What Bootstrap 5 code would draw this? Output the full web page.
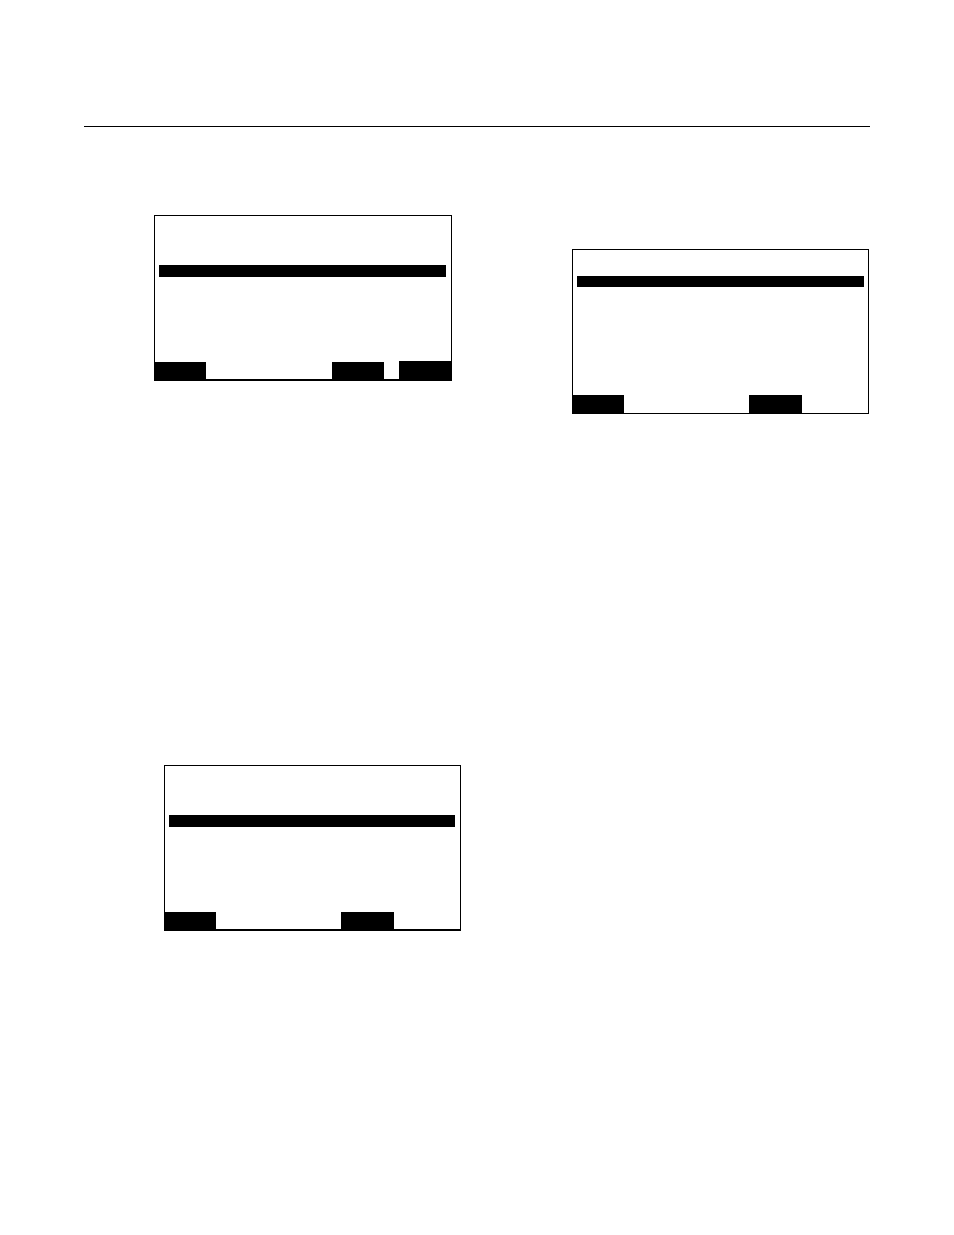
<!DOCTYPE html>
<html lang="en">
<head>
<meta charset="utf-8">
<meta name="viewport" content="width=device-width, initial-scale=1">
<title>Terminal screens</title>
<link href="https://cdn.jsdelivr.net/npm/bootstrap@5.3.0/dist/css/bootstrap.min.css" rel="stylesheet">
<style>
  body { font-family: "Liberation Sans", Arial, sans-serif; background: #fff; color: #000; }
  .sheet { padding: 126px 84px; }
  .rule { border-top: 1px solid #000; }
  .lcd { height: 166px; border: 1px solid #000; border-bottom-width: 2px; }
  .lcd-first { margin: 88px 25px 0 70px; }
  .lcd-second { margin: 122px 1px 0 95px; height: 165px; border-bottom-width: 1px; }
  .lcd-third { margin: 384px 16px 0 80px; }
  /* selected line */
  .selection { height: 12px; margin: 49px 5px 0 4px; background: #000; }
  .lcd-second .selection { height: 11px; margin: 26px 4px 0; }
  /* soft keys along the bottom edge */
  .softkey { width: 53px; height: 17px; background: #000; }
  .softkey-start { width: 51px; }
  .lcd-first .softkey-end { width: 52px; }
  .lcd-first .softkey-last { width: 52px; height: 18px; margin-left: 15px; }
  .lcd-second .softkey { height: 18px; }
  .softkey-blank { width: 66px; }
</style>
</head>
<body>
<main class="sheet">
  <header class="rule"></header>
  <div class="row g-0">
    <div class="col-6">
      <section class="lcd lcd-first d-flex flex-column">
        <div class="selection"></div>
        <div class="d-flex align-items-end mt-auto">
          <div class="softkey softkey-start"></div>
          <div class="softkey softkey-end ms-auto"></div>
          <div class="softkey softkey-last"></div>
        </div>
      </section>
      <section class="lcd lcd-third d-flex flex-column">
        <div class="selection"></div>
        <div class="d-flex align-items-end mt-auto">
          <div class="softkey softkey-start"></div>
          <div class="softkey softkey-end ms-auto"></div>
          <div class="softkey-blank"></div>
        </div>
      </section>
    </div>
    <div class="col-6">
      <section class="lcd lcd-second d-flex flex-column">
        <div class="selection"></div>
        <div class="d-flex align-items-end mt-auto">
          <div class="softkey softkey-start"></div>
          <div class="softkey softkey-end ms-auto"></div>
          <div class="softkey-blank"></div>
        </div>
      </section>
    </div>
  </div>
</main>
<script src="https://cdn.jsdelivr.net/npm/bootstrap@5.3.0/dist/js/bootstrap.bundle.min.js"></script>
</body>
</html>
